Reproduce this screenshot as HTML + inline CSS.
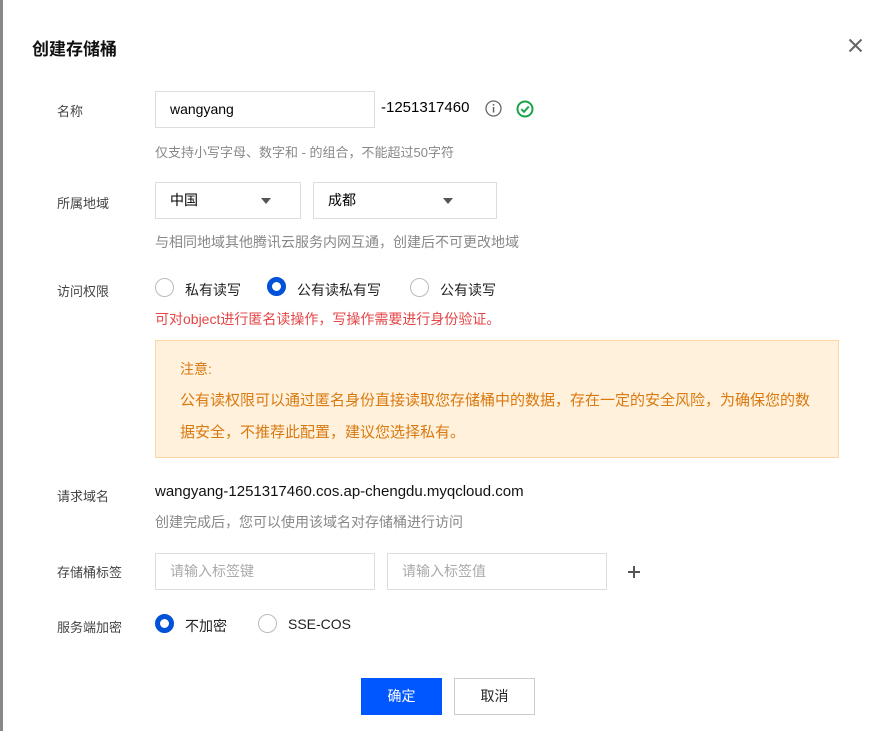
<!DOCTYPE html>
<html><head><meta charset="utf-8"><style>
*{margin:0;padding:0;box-sizing:border-box}
body{width:884px;height:731px;background:#fff;position:relative;overflow:hidden;font-family:"Liberation Sans","Noto Sans CJK SC",sans-serif;font-size:14px;color:#000}
.a{position:absolute;white-space:nowrap}
.lab{color:#444;font-size:13px}
.hint{color:#888;font-size:14px}
.inp{position:absolute;border:1px solid #ddd;background:#fff;height:37px;font-size:14px;line-height:35px;padding-left:14px}
.radio{position:absolute;width:19px;height:19px;border:1px solid #bbb;border-radius:50%;background:#fff}
.radio.on{border:5px solid #0052d9}
.caret{position:absolute;width:0;height:0;border-left:5px solid transparent;border-right:5px solid transparent;border-top:6px solid #555}
</style></head><body>
<div class="a" style="left:0;top:0;width:3px;height:731px;background:#888"></div>
<div class="a" style="left:32px;top:35px;font-size:17px;font-weight:bold;color:#111">创建存储桶</div>
<svg class="a" style="left:848px;top:38px" width="15" height="15" viewBox="0 0 15 15"><path d="M1.5 1.5L13.5 13.5M13.5 1.5L1.5 13.5" stroke="#666" stroke-width="2"/></svg>

<div class="a lab" style="left:57px;top:101px">名称</div>
<div class="inp" style="left:155px;top:91px;width:220px">wangyang</div>
<div class="a" style="left:381px;top:99px;font-size:15px">-1251317460</div>
<svg class="a" style="left:485px;top:100px" width="17" height="17" viewBox="0 0 17 17"><circle cx="8.5" cy="8.5" r="7.5" fill="none" stroke="#666" stroke-width="1.3"/><rect x="7.8" y="7" width="1.5" height="5.5" fill="#666"/><rect x="7.8" y="4" width="1.5" height="1.6" fill="#666"/></svg>
<svg class="a" style="left:516px;top:100px" width="18" height="18" viewBox="0 0 18 18"><circle cx="9" cy="9" r="7.5" fill="none" stroke="#1aa34a" stroke-width="2"/><path d="M5.3 9.2L8 11.8L12.8 6.5" fill="none" stroke="#1aa34a" stroke-width="2"/></svg>
<div class="a hint" style="left:155px;top:142px;font-size:13px">仅支持小写字母、数字和 - 的组合，不能超过50字符</div>

<div class="a lab" style="left:57px;top:193px">所属地域</div>
<div class="inp" style="left:155px;top:182px;width:146px">中国</div>
<div class="caret" style="left:261px;top:198px"></div>
<div class="inp" style="left:313px;top:182px;width:184px">成都</div>
<div class="caret" style="left:443px;top:198px"></div>
<div class="a hint" style="left:155px;top:232px">与相同地域其他腾讯云服务内网互通，创建后不可更改地域</div>

<div class="a lab" style="left:57px;top:281px">访问权限</div>
<div class="radio" style="left:155px;top:278px"></div>
<div class="a" style="left:185px;top:280px;color:#222">私有读写</div>
<div class="radio on" style="left:267px;top:277px"></div>
<div class="a" style="left:297px;top:280px;color:#222">公有读私有写</div>
<div class="radio" style="left:410px;top:278px"></div>
<div class="a" style="left:440px;top:280px;color:#222">公有读写</div>
<div class="a" style="left:155px;top:309px;color:#e54545;font-size:14px">可对object进行匿名读操作，写操作需要进行身份验证。</div>

<div class="a" style="left:155px;top:340px;width:684px;height:118px;background:#fff1dc;border:1px solid #fcd6a3"></div>
<div class="a" style="left:180px;top:359px;color:#d9790f;font-size:14px">注意:</div>
<div class="a" style="left:180px;top:389px;color:#d9790f;font-size:15px">公有读权限可以通过匿名身份直接读取您存储桶中的数据，存在一定的安全风险，为确保您的数</div>
<div class="a" style="left:180px;top:421px;color:#d9790f;font-size:15px">据安全，不推荐此配置，建议您选择私有。</div>

<div class="a lab" style="left:57px;top:486px">请求域名</div>
<div class="a" style="left:155px;top:483px;color:#111;font-size:15px">wangyang-1251317460.cos.ap-chengdu.myqcloud.com</div>
<div class="a hint" style="left:155px;top:512px">创建完成后，您可以使用该域名对存储桶进行访问</div>

<div class="a lab" style="left:57px;top:562px">存储桶标签</div>
<div class="inp" style="left:155px;top:553px;width:220px;color:#aaa">请输入标签键</div>
<div class="inp" style="left:387px;top:553px;width:220px;color:#aaa">请输入标签值</div>
<svg class="a" style="left:627px;top:565px" width="14" height="14" viewBox="0 0 14 14"><path d="M7 1V13M1 7H13" stroke="#555" stroke-width="2"/></svg>

<div class="a lab" style="left:57px;top:617px">服务端加密</div>
<div class="radio on" style="left:155px;top:614px"></div>
<div class="a" style="left:185px;top:616px;color:#222">不加密</div>
<div class="radio" style="left:258px;top:614px"></div>
<div class="a" style="left:288px;top:616px;color:#222">SSE-COS</div>

<div class="a" style="left:361px;top:678px;width:81px;height:37px;background:#0057ff;color:#fff;text-align:center;line-height:37px">确定</div>
<div class="a" style="left:454px;top:678px;width:81px;height:37px;border:1px solid #ccc;color:#222;text-align:center;line-height:35px">取消</div>
</body></html>
